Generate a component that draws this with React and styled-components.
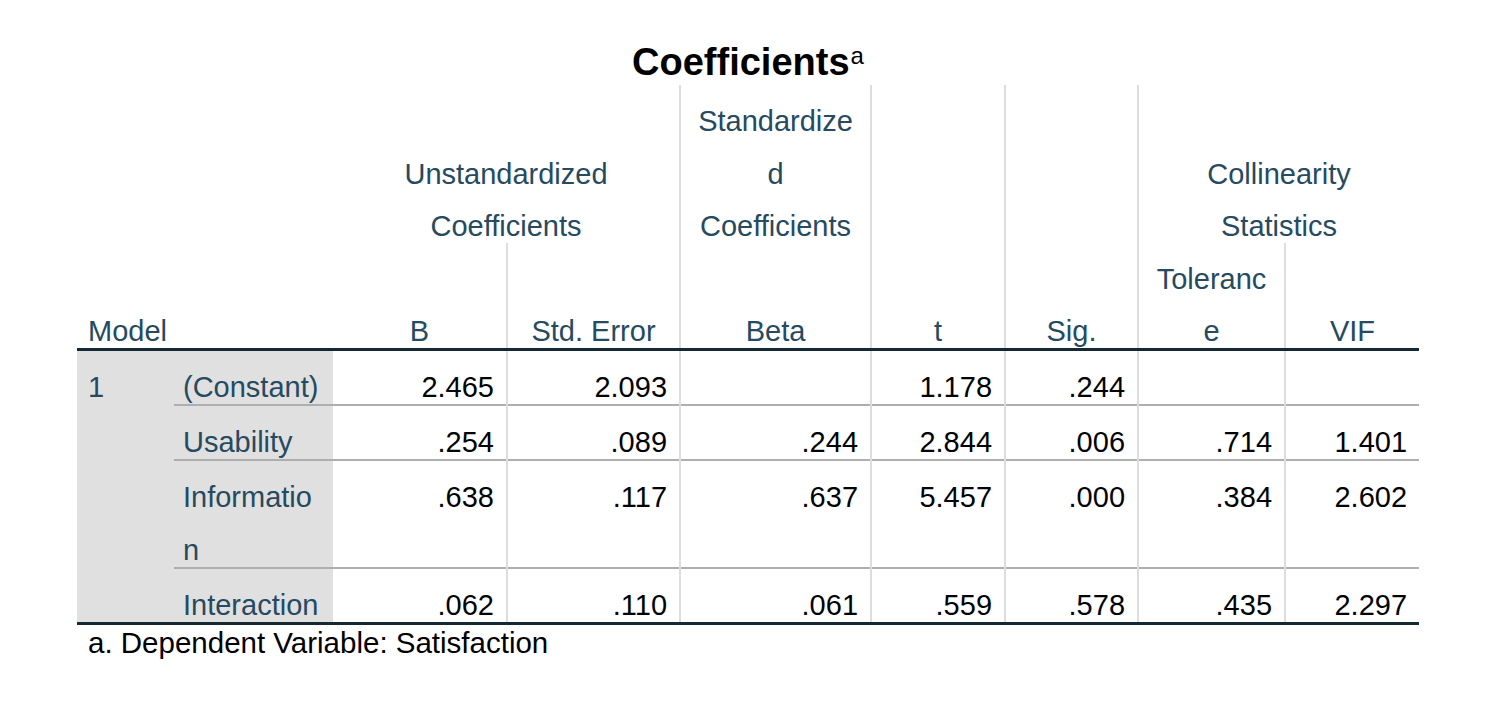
import React from 'react';
import styled, { createGlobalStyle } from 'styled-components';

const GlobalStyle = createGlobalStyle`
  html, body {
    margin: 0;
    background: #ffffff;
  }
  body {
    font-family: "Liberation Sans", Arial, sans-serif;
  }
`;

const Page = styled.div`
  padding: 40px 0 0 77px;
`;

const Output = styled.div`
  width: 1342px;
`;

const Title = styled.div`
  font-size: 38px;
  font-weight: 700;
  line-height: 45px;
  text-align: center;
  color: #000000;
`;

const Sup = styled.sup`
  font-size: 24px;
  font-weight: 400;
  line-height: 0;
  vertical-align: 11px;
  margin-left: 1px;
`;

const Grid = styled.table`
  width: 1342px;
  table-layout: fixed;
  border-collapse: collapse;
  font-size: 29px;
  line-height: 52.5px;

  thead,
  tbody {
    border-bottom: 3px solid #152935;
  }

  tbody {
    line-height: 53px;
  }
`;

const Cell = styled.td`
  padding: 10px ${(p) => (p.$align === 'right' ? '12px' : '11px')} 0 ${(p) => (p.$label ? '9px' : '11px')};
  vertical-align: ${(p) => (p.$bottom ? 'bottom' : 'top')};
  text-align: ${(p) => p.$align || 'left'};
  color: ${(p) => (p.$num ? '#010205' : '#264a60')};
  background: ${(p) => (p.$shade ? '#e0e0e0' : 'transparent')};
  border-left: ${(p) => (p.$rule ? '2px solid #dddddd' : 'none')};
  border-top: ${(p) => (p.$sep ? '2px solid #aeaeae' : 'none')};
  font-weight: 400;
  white-space: nowrap;
`;

const Text = styled.div`
  margin-bottom: -10px;
`;

const Note = styled.div`
  font-size: 29.5px;
  line-height: 34px;
  padding: 1px 11px 0;
  color: #000000;
`;

const widths = [97, 159, 174, 173, 191, 134, 133, 147, 134];

const rows = [
  { label: ['(Constant)'], values: ['2.465', '2.093', '', '1.178', '.244', '', ''] },
  { label: ['Usability'], values: ['.254', '.089', '.244', '2.844', '.006', '.714', '1.401'] },
  { label: ['Informatio', 'n'], values: ['.638', '.117', '.637', '5.457', '.000', '.384', '2.602'] },
  { label: ['Interaction'], values: ['.062', '.110', '.061', '.559', '.578', '.435', '2.297'] },
];

// columns (B .. VIF) that carry a vertical rule on their left edge in the body
const bodyRules = [false, true, true, true, true, true, true];

const Lines = ({ items }) => (
  <Text>
    {items.map((t, i) => (
      <React.Fragment key={i}>
        {i > 0 && <br />}
        {t}
      </React.Fragment>
    ))}
  </Text>
);

const App = () => {
  return (
    <>
      <GlobalStyle />
      <Page>
        <Output>
          <Title>
            Coefficients<Sup>a</Sup>
          </Title>
          <Grid>
            <colgroup>
              {widths.map((w, i) => (
                <col key={i} style={{ width: w }} />
              ))}
            </colgroup>
            <thead>
              <tr>
                <Cell as="th" colSpan={2} rowSpan={2} $bottom>
                  <Lines items={['Model']} />
                </Cell>
                <Cell as="th" colSpan={2} $bottom $align="center">
                  <Lines items={['Unstandardized', 'Coefficients']} />
                </Cell>
                <Cell as="th" $bottom $align="center" $rule>
                  <Lines items={['Standardize', 'd', 'Coefficients']} />
                </Cell>
                <Cell as="th" rowSpan={2} $bottom $align="center" $rule>
                  <Lines items={['t']} />
                </Cell>
                <Cell as="th" rowSpan={2} $bottom $align="center" $rule>
                  <Lines items={['Sig.']} />
                </Cell>
                <Cell as="th" colSpan={2} $bottom $align="center" $rule>
                  <Lines items={['Collinearity', 'Statistics']} />
                </Cell>
              </tr>
              <tr>
                <Cell as="th" $bottom $align="center">
                  <Lines items={['B']} />
                </Cell>
                <Cell as="th" $bottom $align="center" $rule>
                  <Lines items={['Std. Error']} />
                </Cell>
                <Cell as="th" $bottom $align="center" $rule>
                  <Lines items={['Beta']} />
                </Cell>
                <Cell as="th" $bottom $align="center" $rule>
                  <Lines items={['Toleranc', 'e']} />
                </Cell>
                <Cell as="th" $bottom $align="center" $rule>
                  <Lines items={['VIF']} />
                </Cell>
              </tr>
            </thead>
            <tbody>
              {rows.map((row, r) => (
                <tr key={r}>
                  {r === 0 && (
                    <Cell rowSpan={rows.length} $shade>
                      <Lines items={['1']} />
                    </Cell>
                  )}
                  <Cell $shade $label $sep={r > 0}>
                    <Lines items={row.label} />
                  </Cell>
                  {row.values.map((v, c) => (
                    <Cell key={c} $num $align="right" $rule={bodyRules[c]} $sep={r > 0}>
                      <Lines items={[v]} />
                    </Cell>
                  ))}
                </tr>
              ))}
            </tbody>
          </Grid>
          <Note>a. Dependent Variable: Satisfaction</Note>
        </Output>
      </Page>
    </>
  );
};

export default App;
